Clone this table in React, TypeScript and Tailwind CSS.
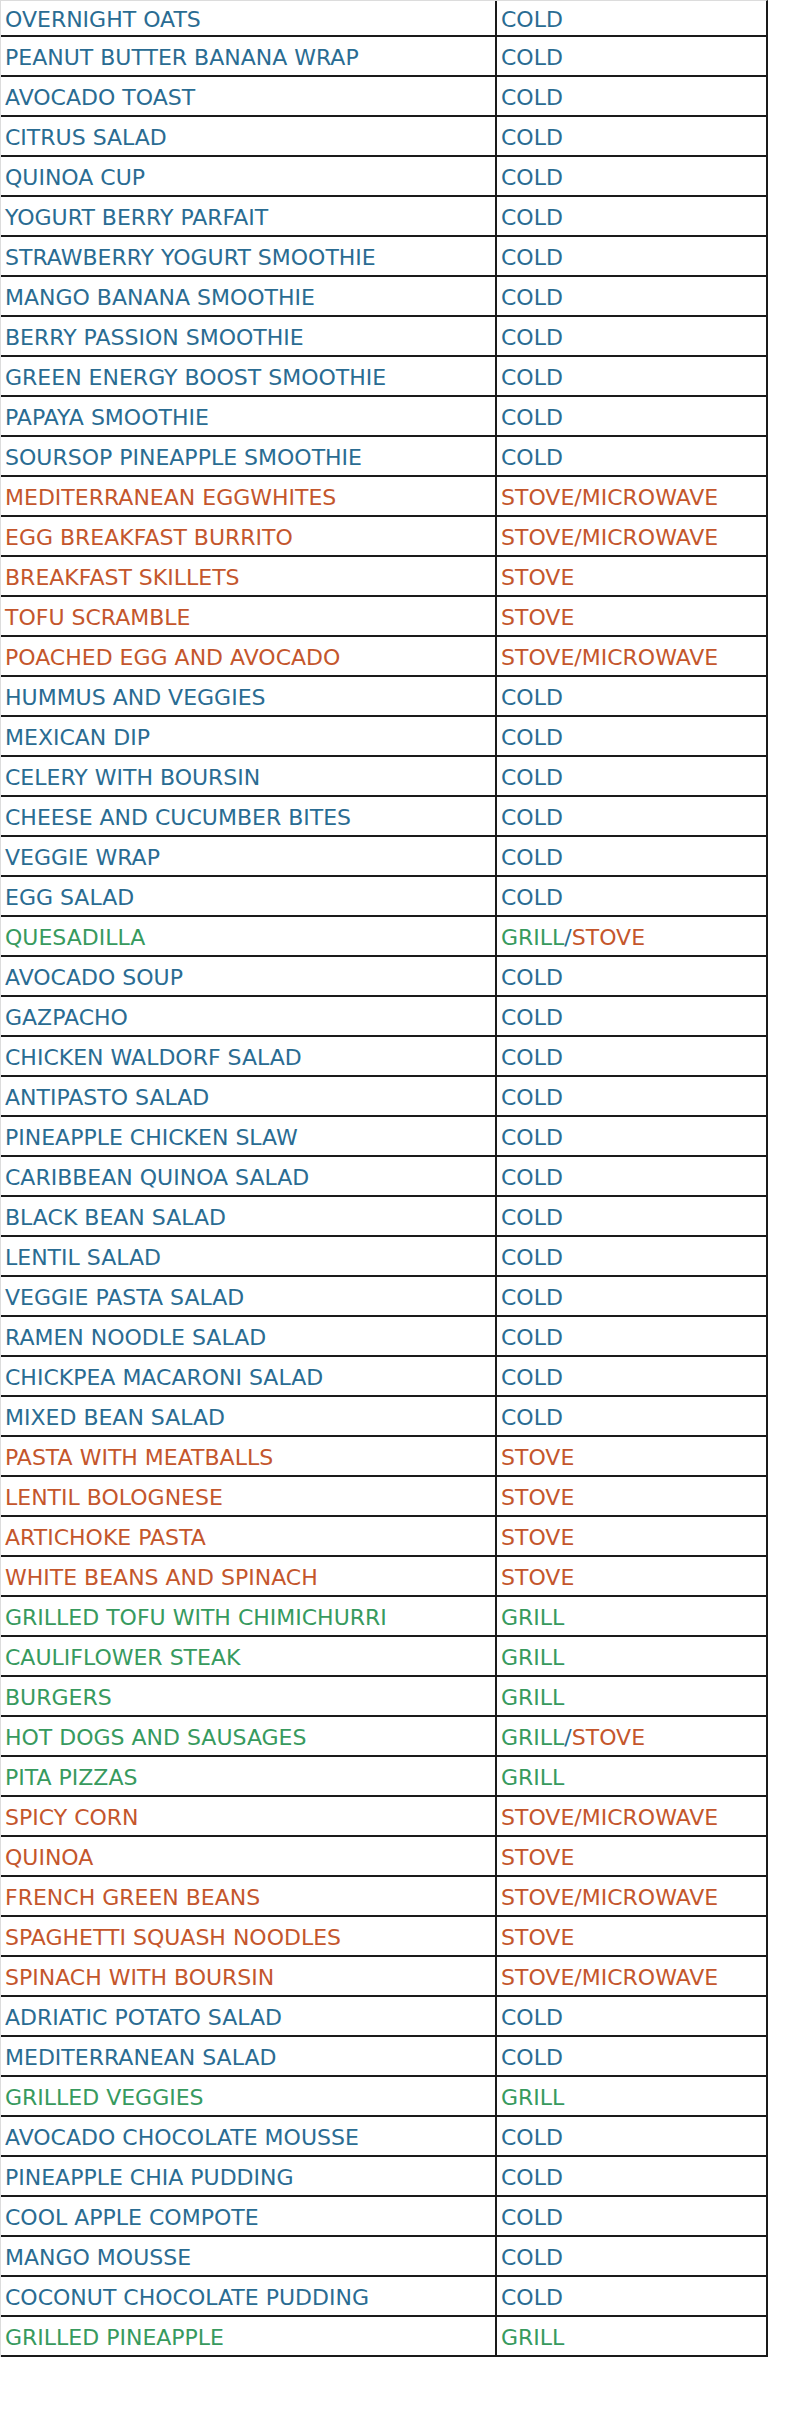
const BLUE = "text-[#2a6c92]";
const ORANGE = "text-[#c4562c]";
const GREEN = "text-[#379a5e]";

type Kind = "cold" | "stove" | "grill";

const ROWS: [string, string, Kind][] = [
  ["OVERNIGHT OATS", "COLD", "cold"],
  ["PEANUT BUTTER BANANA WRAP", "COLD", "cold"],
  ["AVOCADO TOAST", "COLD", "cold"],
  ["CITRUS SALAD", "COLD", "cold"],
  ["QUINOA CUP", "COLD", "cold"],
  ["YOGURT BERRY PARFAIT", "COLD", "cold"],
  ["STRAWBERRY YOGURT SMOOTHIE", "COLD", "cold"],
  ["MANGO BANANA SMOOTHIE", "COLD", "cold"],
  ["BERRY PASSION SMOOTHIE", "COLD", "cold"],
  ["GREEN ENERGY BOOST SMOOTHIE", "COLD", "cold"],
  ["PAPAYA SMOOTHIE", "COLD", "cold"],
  ["SOURSOP PINEAPPLE SMOOTHIE", "COLD", "cold"],
  ["MEDITERRANEAN EGGWHITES", "STOVE/MICROWAVE", "stove"],
  ["EGG BREAKFAST BURRITO", "STOVE/MICROWAVE", "stove"],
  ["BREAKFAST SKILLETS", "STOVE", "stove"],
  ["TOFU SCRAMBLE", "STOVE", "stove"],
  ["POACHED EGG AND AVOCADO", "STOVE/MICROWAVE", "stove"],
  ["HUMMUS AND VEGGIES", "COLD", "cold"],
  ["MEXICAN DIP", "COLD", "cold"],
  ["CELERY WITH BOURSIN", "COLD", "cold"],
  ["CHEESE AND CUCUMBER BITES", "COLD", "cold"],
  ["VEGGIE WRAP", "COLD", "cold"],
  ["EGG SALAD", "COLD", "cold"],
  ["QUESADILLA", "GRILL/STOVE", "grill"],
  ["AVOCADO SOUP", "COLD", "cold"],
  ["GAZPACHO", "COLD", "cold"],
  ["CHICKEN WALDORF SALAD", "COLD", "cold"],
  ["ANTIPASTO SALAD", "COLD", "cold"],
  ["PINEAPPLE CHICKEN SLAW", "COLD", "cold"],
  ["CARIBBEAN QUINOA SALAD", "COLD", "cold"],
  ["BLACK BEAN SALAD", "COLD", "cold"],
  ["LENTIL SALAD", "COLD", "cold"],
  ["VEGGIE PASTA SALAD", "COLD", "cold"],
  ["RAMEN NOODLE SALAD", "COLD", "cold"],
  ["CHICKPEA MACARONI SALAD", "COLD", "cold"],
  ["MIXED BEAN SALAD", "COLD", "cold"],
  ["PASTA WITH MEATBALLS", "STOVE", "stove"],
  ["LENTIL BOLOGNESE", "STOVE", "stove"],
  ["ARTICHOKE PASTA", "STOVE", "stove"],
  ["WHITE BEANS AND SPINACH", "STOVE", "stove"],
  ["GRILLED TOFU WITH CHIMICHURRI", "GRILL", "grill"],
  ["CAULIFLOWER STEAK", "GRILL", "grill"],
  ["BURGERS", "GRILL", "grill"],
  ["HOT DOGS AND SAUSAGES", "GRILL/STOVE", "grill"],
  ["PITA PIZZAS", "GRILL", "grill"],
  ["SPICY CORN", "STOVE/MICROWAVE", "stove"],
  ["QUINOA", "STOVE", "stove"],
  ["FRENCH GREEN BEANS", "STOVE/MICROWAVE", "stove"],
  ["SPAGHETTI SQUASH NOODLES", "STOVE", "stove"],
  ["SPINACH WITH BOURSIN", "STOVE/MICROWAVE", "stove"],
  ["ADRIATIC POTATO SALAD", "COLD", "cold"],
  ["MEDITERRANEAN SALAD", "COLD", "cold"],
  ["GRILLED VEGGIES", "GRILL", "grill"],
  ["AVOCADO CHOCOLATE MOUSSE", "COLD", "cold"],
  ["PINEAPPLE CHIA PUDDING", "COLD", "cold"],
  ["COOL APPLE COMPOTE", "COLD", "cold"],
  ["MANGO MOUSSE", "COLD", "cold"],
  ["COCONUT CHOCOLATE PUDDING", "COLD", "cold"],
  ["GRILLED PINEAPPLE", "GRILL", "grill"],
];

const COLOR: Record<Kind, string> = { cold: BLUE, stove: ORANGE, grill: GREEN };

// "GRILL/STOVE" is split in three colours in the source
function Method({ label, kind }: { label: string; kind: Kind }) {
  if (label === "GRILL/STOVE") {
    return (
      <span>
        <span className={GREEN}>GRILL</span>
        <span className={BLUE}>/</span>
        <span className={ORANGE}>STOVE</span>
      </span>
    );
  }
  return <span className={COLOR[kind]}>{label}</span>;
}

export default function App() {
  return (
    <div className="min-h-[2410px] bg-white font-['DejaVu_Sans',sans-serif] text-[22px] leading-none">
      <div className="w-[768px] border-t border-l border-t-[#dcdcdc] border-l-[#dcdcdc] border-r-2 border-r-[#1a1a1a]">
        {ROWS.map(([name, method, kind], i) => (
          <div
            key={name}
            className={`flex border-b-2 border-[#1a1a1a] ${i === 0 ? "h-[36px]" : "h-[40px]"}`}
          >
            <div className="w-[496px] shrink-0 border-r-2 border-[#1a1a1a] pl-[4px] pt-[3px] flex items-center">
              <span className={COLOR[kind]}>{name}</span>
            </div>
            <div className="flex-1 pl-[4px] pt-[3px] flex items-center">
              <Method label={method} kind={kind} />
            </div>
          </div>
        ))}
      </div>
    </div>
  );
}
